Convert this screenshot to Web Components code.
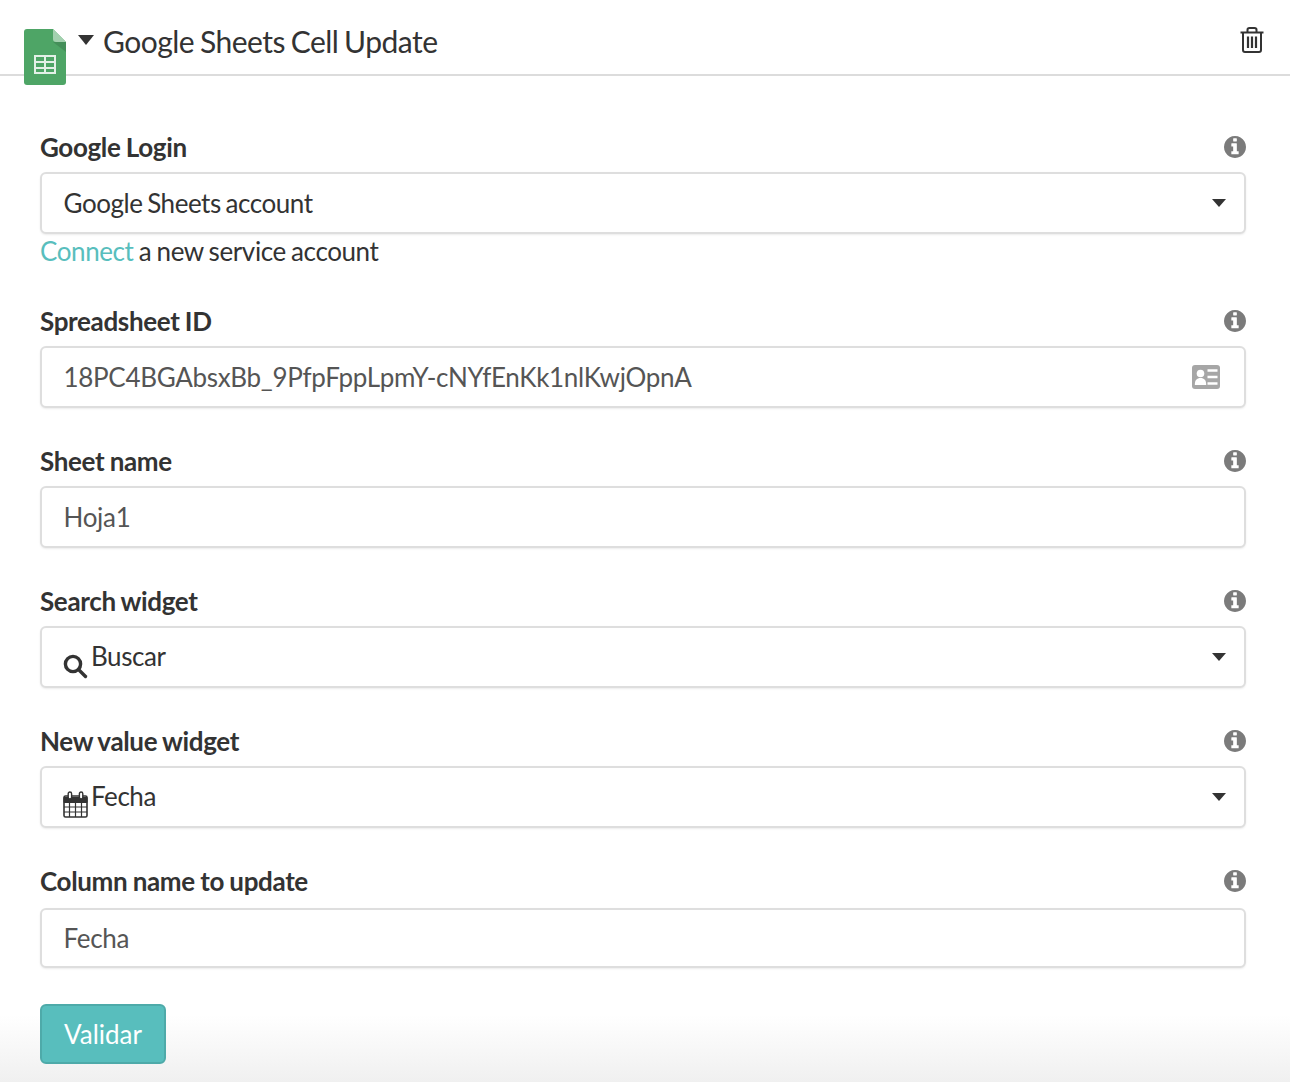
<!DOCTYPE html>
<html lang="en">
<head>
<meta charset="utf-8">
<title>Google Sheets Cell Update</title>
<style>
    html, body { margin: 0; padding: 0; }
    body {
        height: 1082px;
        overflow: hidden;
        font-family: Lato, "Open Sans", sans-serif;
        color: #333;
        background: linear-gradient(to bottom, #fff 0, #fff 1015px, #f0f0f0 1082px);
    }
</style>
</head>
<body>
<step-editor>
    <step-header slot="header">Google Sheets Cell Update</step-header>

    <form-field label="Google Login">
        <select-box>Google Sheets account</select-box>
        <connect-hint slot="after"></connect-hint>
    </form-field>

    <form-field label="Spreadsheet ID">
        <text-box icon="card">18PC4BGAbsxBb_9PfpFppLpmY-cNYfEnKk1nlKwjOpnA</text-box>
    </form-field>

    <form-field label="Sheet name">
        <text-box>Hoja1</text-box>
    </form-field>

    <form-field label="Search widget">
        <select-box icon="search">Buscar</select-box>
    </form-field>

    <form-field label="New value widget">
        <select-box icon="calendar">Fecha</select-box>
    </form-field>

    <form-field label="Column name to update" last>
        <text-box short>Fecha</text-box>
    </form-field>

    <action-button>Validar</action-button>
</step-editor>

<script>
const ICONS = {
    search: `<svg width="25" height="25" viewBox="0 0 25 25" fill="none" stroke="#333" stroke-width="3.4">
        <circle cx="10" cy="10" r="7.6"/><path d="M15.500 15.500l7 7" stroke-linecap="round"/></svg>`,
    calendar: `<svg width="25" height="27" viewBox="0 0 25 27" fill="none" stroke="#333">
        <rect x="1" y="5" width="23" height="21" rx="1.5" stroke-width="1.6" fill="#fff"/>
        <path d="M1 6.5h23v5H1z" fill="#333" stroke-width="1"/>
        <path d="M1 16h23M1 21h23M6.5 11v15M12.5 11v15M18.500 11v15" stroke-width="1.2"/>
        <rect x="5.2" y="1" width="3.400" height="7" rx="1.700" fill="#fff" stroke-width="1.4"/>
        <rect x="16.400" y="1" width="3.400" height="7" rx="1.700" fill="#fff" stroke-width="1.4"/></svg>`,
    card: `<svg width="28" height="24" viewBox="0 0 28 24">
        <rect width="28" height="24" rx="3" fill="#a6a6a6"/>
        <circle cx="8.500" cy="8.500" r="3.800" fill="#fff"/>
        <path d="M2.800 20c0-5 2-7 5.700-7s5.700 2 5.700 7z" fill="#fff"/>
        <path d="M15.500 5.500h10M15.500 12h10M15.500 18.500h10" stroke="#fff" stroke-width="2.400"/></svg>`,
    info: `<svg width="22" height="22" viewBox="128 128 1536 1536" fill="#7b7b7b"><path d="M1152 1376v-160q0-14-9-23t-23-9h-96v-512q0-14-9-23t-23-9h-320q-14 0-23 9t-9 23v160q0 14 9 23t23 9h96v320h-96q-14 0-23 9t-9 23v160q0 14 9 23t23 9h448q14 0 23-9t9-23zm-128-896v-160q0-14-9-23t-23-9h-192q-14 0-23 9t-9 23v160q0 14 9 23t23 9h192q14 0 23-9t9-23zm640 416q0 209-103 385.500t-279.500 279.500-385.500 103-385.500-103-279.500-279.500-103-385.500 103-385.500 279.500-279.500 385.500-103 385.500 103 279.500 279.500 103 385.500z"/></svg>`,
    trash: `<svg width="24" height="26" viewBox="0 0 24 26" fill="none" stroke="#333" stroke-width="2">
        <path d="M0.500 5.500h23" /><path d="M7.500 5V2.800Q7.500 1 9.500 1h5q2 0 2 1.800V5"/>
        <path d="M3 5.500V23q0 2 2 2h14q2 0 2-2V5.500"/>
        <path d="M8 9.500v11.500M12 9.500v11.500M16 9.500v11.500" stroke-width="2.200"/></svg>`,
    sheets: `<svg width="42" height="56" viewBox="0 0 42 56">
        <path d="M3 0h26l13 13v40q0 3-3 3H3q-3 0-3-3V3q0-3 3-3z" fill="#4ea566"/>
        <path d="M29 13l13 10V13z" fill="#448f59"/>
        <path d="M29 0l13 13H32q-3 0-3-3z" fill="#a3d1af"/>
        <path d="M10 26h22v19H10z" fill="#e3f0e7"/>
        <path d="M12 28h8v4h-8zM22 28h8v4h-8zM12 34h8v4h-8zM22 34h8v4h-8zM12 40h8v3h-8zM22 40h8v3h-8z" fill="#4ea566"/></svg>`
};

class StepEditor extends HTMLElement {
    constructor() {
        super();
        this.attachShadow({ mode: "open" });
        this.shadowRoot.innerHTML = `
        <style>
            :host { display: block; }
            .form {
                display: flex;
                flex-direction: column;
                padding: 53px 44px 18px 40px;
            }
        </style>
        <slot name="header"></slot>
        <div class="form"><slot></slot></div>
    `;
    }
}

class StepHeader extends HTMLElement {
    constructor() {
        super();
        this.attachShadow({ mode: "open" });
        this.shadowRoot.innerHTML = `
        <style>
            :host {
                display: block;
                position: relative;
                height: 74px;
                border-bottom: 2px solid #dcdcdc;
            }
            .bar {
                display: flex;
                align-items: center;
                box-sizing: border-box;
                height: 74px;
                padding: 8px 26px 0 78px;
            }
            .caret {
                width: 0;
                height: 0;
                border-left: 8px solid transparent;
                border-right: 8px solid transparent;
                border-top: 10px solid #333;
                margin: -2px 9px 0 0;
            }
            .title {
                flex: 1;
                font-size: 30px;
                line-height: 40px;
                color: #333;
                letter-spacing: -0.5px;
                word-spacing: -1.5px;
            }
            .trash { display: flex; margin-top: -3px; }
            .logo { position: absolute; left: 24px; top: 29px; display: flex; }
        </style>
        <div class="logo">${ICONS.sheets}</div>
        <div class="bar">
            <span class="caret"></span>
            <span class="title"><slot></slot></span>
            <span class="trash">${ICONS.trash}</span>
        </div>
    `;
    }
}

class FormField extends HTMLElement {
    static get observedAttributes() { return ["label"]; }

    constructor() {
        super();
        this.attachShadow({ mode: "open" });
        this.shadowRoot.innerHTML = `
        <style>
            :host { display: block; margin-bottom: 35px; }
            :host([last]) { margin-bottom: 36px; }
            :host([last]) .head { margin-bottom: 9px; }
            .head {
                display: flex;
                justify-content: space-between;
                align-items: center;
                height: 36px;
                margin-bottom: 7px;
            }
            .label {
                font-size: 26px;
                font-weight: 700;
                color: #333;
                letter-spacing: -0.35px;
                word-spacing: -0.6px;
                margin-top: -1px;
            }
            .info { display: flex; }
        </style>
        <div class="head">
            <span class="label"></span>
            <span class="info">${ICONS.info}</span>
        </div>
        <slot></slot>
        <slot name="after"></slot>
    `;
    }

    attributeChangedCallback(name, oldValue, newValue) {
        this.shadowRoot.querySelector(".label").textContent = newValue;
    }
}

const BOX_STYLES = `
    :host { display: block; }
    .box {
        display: flex;
        align-items: center;
        box-sizing: border-box;
        height: 62px;
        padding: 0 24px 1px 21.5px;
        border: 2px solid #dedede;
        border-radius: 6px;
        background: #fff;
        box-shadow: 0 1px 2px rgba(0, 0, 0, .08);
        font-size: 26px;
    }
    .value { flex: 1; white-space: nowrap; }
`;

class SelectBox extends HTMLElement {
    connectedCallback() {
        if (this.shadowRoot) return;
        this.attachShadow({ mode: "open" });
        const icon = ICONS[this.getAttribute("icon")];
        this.shadowRoot.innerHTML = `
        <style>
            ${BOX_STYLES}
            .box { letter-spacing: -0.45px; word-spacing: -1.5px; }
            .value { color: #333; }
            .with-icon .value { margin-top: -1px; }
            .icon { display: flex; margin: 20px 3px 0 -0.5px; }
            .calendar .icon { margin: 16px 3px 0 -0.5px; }
            .caret {
                width: 0;
                height: 0;
                border-left: 7px solid transparent;
                border-right: 7px solid transparent;
                border-top: 8px solid #333;
                margin: 1px -6px 0 0;
            }
        </style>
        <div class="box ${icon ? "with-icon " + this.getAttribute("icon") : ""}">
            ${icon ? `<span class="icon">${icon}</span>` : ""}
            <span class="value"><slot></slot></span>
            <span class="caret"></span>
        </div>
    `;
    }
}

class TextBox extends HTMLElement {
    connectedCallback() {
        if (this.shadowRoot) return;
        this.attachShadow({ mode: "open" });
        const icon = ICONS[this.getAttribute("icon")];
        this.shadowRoot.innerHTML = `
        <style>
            ${BOX_STYLES}
            :host([short]) .box { height: 60px; }
            .box { letter-spacing: -0.3px; }
            .value { color: #555; }
            .icon { display: flex; margin-top: 1px; }
        </style>
        <div class="box">
            <span class="value"><slot></slot></span>
            ${icon ? `<span class="icon">${icon}</span>` : ""}
        </div>
    `;
    }
}

class ConnectHint extends HTMLElement {
    constructor() {
        super();
        this.attachShadow({ mode: "open" });
        this.shadowRoot.innerHTML = `
        <style>
            :host {
                display: block;
                height: 34px;
                font-size: 26px;
                line-height: 34px;
                color: #333;
                letter-spacing: -0.4px;
                word-spacing: -1px;
            }
            a { color: #58bebd; text-decoration: none; }
        </style>
        <a href="#">Connect</a> a new service account
    `;
    }
}

class ActionButton extends HTMLElement {
    constructor() {
        super();
        this.attachShadow({ mode: "open" });
        this.shadowRoot.innerHTML = `
        <style>
            :host {
                display: flex;
                align-items: center;
                justify-content: center;
                align-self: flex-start;
                box-sizing: border-box;
                width: 126px;
                height: 60px;
                padding-bottom: 1px;
                background: #58bebd;
                border: 2px solid #4eaaa9;
                border-radius: 6px;
                color: #fff;
                font-size: 26px;
            }
        </style>
        <slot></slot>
    `;
    }
}

customElements.define("step-editor", StepEditor);
customElements.define("step-header", StepHeader);
customElements.define("form-field", FormField);
customElements.define("select-box", SelectBox);
customElements.define("text-box", TextBox);
customElements.define("connect-hint", ConnectHint);
customElements.define("action-button", ActionButton);
</script>
</body>
</html>
